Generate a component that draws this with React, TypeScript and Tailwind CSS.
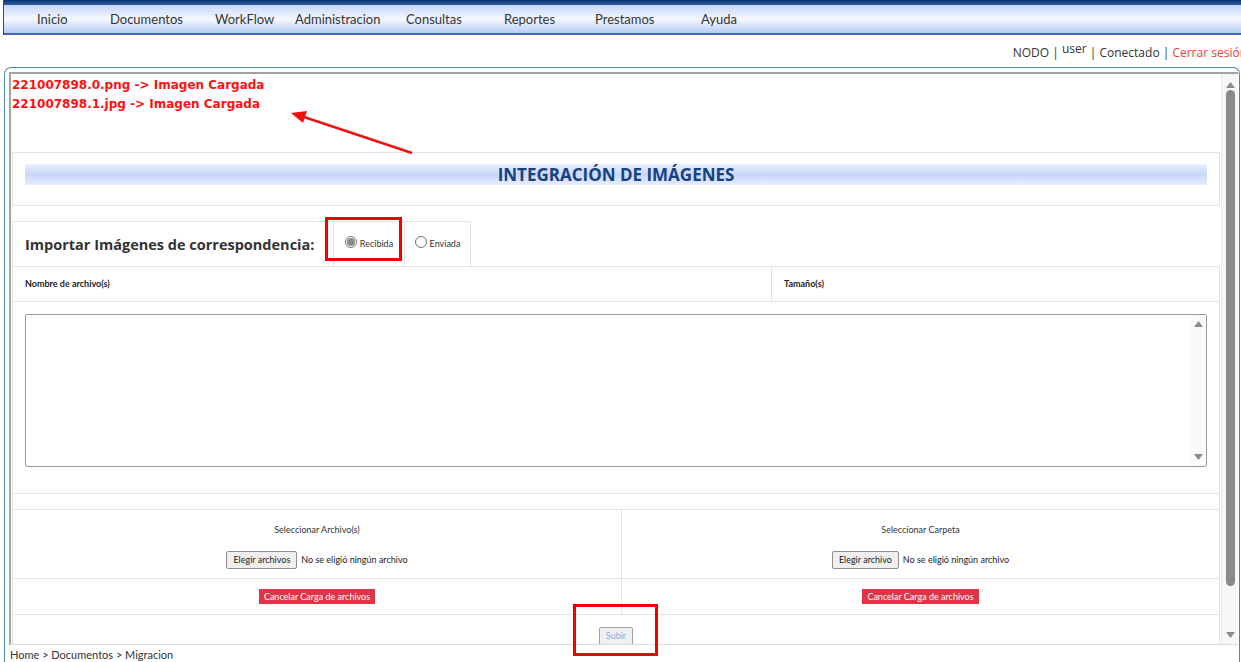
import React from "react";

const menu = [
  { label: "Inicio", w: "w-[73px]" },
  { label: "Documentos", w: "w-[105px]" },
  { label: "WorkFlow", w: "w-[80px]" },
  { label: "Administracion", w: "w-[111px]" },
  { label: "Consultas", w: "w-[98px]" },
  { label: "Reportes", w: "w-[91px]" },
  { label: "Prestamos", w: "w-[106px]" },
  { label: "Ayuda", w: "w-[60px]" },
];

const line = "border-[#e3e3e3]";

function TopMenu() {
  return (
    <div className="ml-[3px] h-[35px] flex flex-col border-l border-[#1d4c86]">
      <div className="h-[5px] bg-gradient-to-b from-[#0d3570] to-[#2b62a6]" />
      <div className="flex-1 flex items-center pl-[33px] pt-[1px] bg-gradient-to-b from-[#c6d7f8] via-[#f5f8ff] to-[#b8ccf4] border-b-2 border-[#4467b8] font-['Lato',sans-serif] text-[13px] text-[#333]">
        {menu.map((m) => (
          <div key={m.label} className={m.w}>
            {m.label}
          </div>
        ))}
      </div>
    </div>
  );
}

function StatusBar() {
  return (
    <div className="h-[32px] flex items-center justify-end pt-[3px] mr-[-6px] text-[12px] text-[#333] whitespace-nowrap">
      <span>NODO |&nbsp;</span>
      <span className="relative -top-[4px]">user</span>
      <span>&nbsp;| Conectado |&nbsp;</span>
      <span className="text-[#f03a3a]">Cerrar sesión</span>
    </div>
  );
}

function Radio({ label, checked }: { label: string; checked?: boolean }) {
  return (
    <div className="flex items-center gap-[3px]">
      <span className="relative -top-[2px] w-[12px] h-[12px] rounded-full border border-[#767676] bg-white flex items-center justify-center">
        {checked && <span className="w-[8px] h-[8px] rounded-full bg-[#8a8a8a]" />}
      </span>
      <span className="font-['Lato',sans-serif] text-[9px] text-[#333]">{label}</span>
    </div>
  );
}

function FileInput({ button }: { button: string }) {
  return (
    <div className="flex items-center gap-[4px] text-[9px] text-[#222]">
      <span className="h-[18px] px-[6px] flex items-center border border-[#8f8f8f] rounded-[2px] bg-[#efefef]">
        {button}
      </span>
      <span>No se eligió ningún archivo</span>
    </div>
  );
}

function CancelButton() {
  return (
    <span className="h-[15px] px-[5px] flex items-center bg-[#dc3545] text-white text-[9px]">
      Cancelar Carga de archivos
    </span>
  );
}

function Triangle({ up }: { up?: boolean }) {
  return (
    <svg width="9" height="6" viewBox="0 0 9 6">
      <path d={up ? "M0 6 L4.5 0 L9 6 Z" : "M0 0 L4.5 6 L9 0 Z"} fill="#8a8a8a" />
    </svg>
  );
}

function Content() {
  return (
    <div className="w-[1210px] h-full overflow-hidden">
      {/* mensajes de carga */}
      <div className="h-[78px] pl-[1px] pt-[2px] font-['DejaVu_Sans',sans-serif] font-bold text-[12px] leading-[19px] text-[#ff1010]">
        <div>221007898.0.png -&gt; Imagen Cargada</div>
        <div>221007898.1.jpg -&gt; Imagen Cargada</div>
      </div>

      {/* titulo */}
      <div className={`mx-[1px] h-[54px] border ${line} pt-[11px] px-[12px]`}>
        <div className="h-[21px] flex items-center justify-center bg-gradient-to-b from-[#eaf0fe] via-[#c8d8fa] to-[#e6edfd] font-['Open_Sans',sans-serif] font-bold text-[17px] text-[#17427f]">
          INTEGRACIÓN DE IMÁGENES
        </div>
      </div>

      <div className="h-[15px]" />

      {/* tipo de correspondencia */}
      <div className={`mx-[1px] w-[459px] h-[45px] flex border-t border-x ${line}`}>
        <div className="w-[320px] flex items-center pl-[12px] pt-[1px] font-['Open_Sans',sans-serif] font-bold text-[14.5px] text-[#333]">
          Importar Imágenes de correspondencia:
        </div>
        <div className={`w-[71px] flex items-center justify-center border-l ${line}`}>
          <Radio label="Recibida" checked />
        </div>
        <div className={`flex-1 flex items-center justify-center border-l ${line}`}>
          <Radio label="Enviada" />
        </div>
      </div>

      {/* encabezado */}
      <div className={`mx-[1px] h-[36px] flex border ${line} font-['Lato',sans-serif] font-bold text-[9px] text-[#222]`}>
        <div className={`w-[759px] flex items-center pl-[12px] border-r ${line}`}>Nombre de archivo(s)</div>
        <div className="flex-1 flex items-center pl-[12px]">Tamaño(s)</div>
      </div>

      <div className={`mx-[1px] h-[192px] border-x border-b ${line} pt-[12px] px-[12px]`}>
        <div className="h-[153px] border border-[#9a9a9a] rounded-[2px] flex justify-end">
          <div className="w-[15px] bg-[#fafafa] flex flex-col items-center justify-between py-[6px]">
            <Triangle up />
            <Triangle />
          </div>
        </div>
      </div>

      <div className={`mx-[1px] h-[16px] border-x border-b ${line}`} />

      {/* seleccion de archivos */}
      <div className={`mx-[1px] border-x ${line} font-['Lato',sans-serif] text-[9px] text-[#333]`}>
        <div className={`h-[69px] grid grid-cols-[609px_1fr] border-b ${line}`}>
          <div className={`flex flex-col items-center pt-[13px] gap-[14px] border-r ${line}`}>
            <span>Seleccionar Archivo(s)</span>
            <FileInput button="Elegir archivos" />
          </div>
          <div className="flex flex-col items-center pt-[13px] gap-[14px]">
            <span>Seleccionar Carpeta</span>
            <FileInput button="Elegir archivo" />
          </div>
        </div>
        <div className={`h-[36px] grid grid-cols-[609px_1fr] border-b ${line}`}>
          <div className={`flex items-center justify-center border-r ${line}`}>
            <CancelButton />
          </div>
          <div className="flex items-center justify-center">
            <CancelButton />
          </div>
        </div>
        <div className="h-[40px] flex justify-center pt-[12px]">
          <span className="h-[18px] px-[6px] flex items-center border border-[#a0a0a0] rounded-[2px] bg-[#f0f0f0] text-[#8ea6e8]">
            Subir
          </span>
        </div>
      </div>
    </div>
  );
}

function Frame() {
  return (
    <div className="ml-[4px] w-[1236px] h-[595px] border-l border-t border-r border-[#4a87b0] rounded-t-[7px]">
      <div className="ml-[4px] mt-[4px] w-[1229px] h-[573px] flex border-t-2 border-l-2 border-[#a3a3a3] border-b border-b-[#dcdcdc]">
        <Content />
        <div className="w-[17px] h-full bg-[#f7f7f7] border-l border-[#e8e8e8] flex flex-col items-center pt-[8px] pb-[6px]">
          <Triangle up />
          <div className="mt-[2px] w-[9px] h-[496px] rounded-full bg-[#8a8a8a]" />
          <div className="flex-1" />
          <Triangle />
        </div>
      </div>
      <div className="pl-[5px] pt-[2px] font-['Lato',sans-serif] text-[11px] text-[#333]">Home &gt; Documentos &gt; Migracion</div>
    </div>
  );
}

function Annotations() {
  return (
    <>
      <svg className="absolute left-0 top-0 pointer-events-none" width="1241" height="662">
        <line x1="412" y1="153" x2="304" y2="117" stroke="#f01010" strokeWidth="2.5" />
        <path d="M291 113 L307 111 L303 123 Z" fill="#f01010" />
      </svg>
      <div className="absolute left-[325px] top-[217px] w-[77px] h-[44px] border-[3px] border-[#f00000]" />
      <div className="absolute left-[573px] top-[604px] w-[85px] h-[52px] border-[3px] border-[#f00000]" />
    </>
  );
}

export default function App() {
  return (
    <div className="relative w-[1241px] h-[662px] overflow-hidden bg-white font-['Open_Sans',sans-serif]">
      <TopMenu />
      <StatusBar />
      <Frame />
      <Annotations />
    </div>
  );
}
